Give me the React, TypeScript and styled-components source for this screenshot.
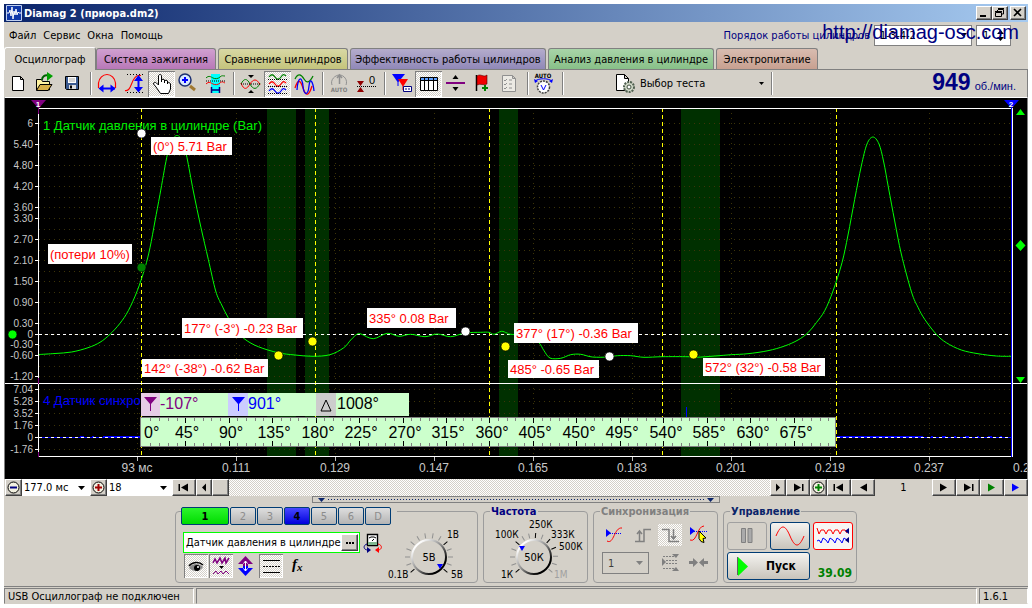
import React from "react";
import styled, { createGlobalStyle, css } from "styled-components";

const ui = `"DejaVu Sans Condensed", "Tahoma", "DejaVu Sans", sans-serif`;
const arial = `"Liberation Sans", Arial, sans-serif`;
const face = "#d4d0c8";
const checker = `repeating-conic-gradient(#ffffff 0 25%, ${face} 0 50%) 0 0 / 2px 2px`;

const GlobalStyle = createGlobalStyle`
  * { box-sizing: border-box; }
  body { margin: 0; background: #fff; font-family: ${ui}; font-size: 11px; color: #000; }
  button, select, input { font: inherit; color: inherit; margin: 0; padding: 0; border: 0; border-radius: 0; background: none; }
  svg { display: block; flex: none; }
`;

const Window = styled.div`
  margin: 4px;
  background: ${face};
`;

const TitleBar = styled.header`
  display: flex;
  align-items: center;
  height: 18px;
  padding: 0 2px;
  background: linear-gradient(90deg, #0a246a, #a6caf0);
  color: #fff;
`;
const Title = styled.h1`
  flex: 1;
  margin: 0 0 0 2px;
  font-size: 11px;
  font-weight: bold;
`;
const CaptionButton = styled.button<{ $gap?: boolean }>`
  width: 16px;
  height: 14px;
  margin-left: ${(p) => (p.$gap ? 2 : 0)}px;
  background: ${face};
  border: 1px solid;
  border-color: #fff #404040 #404040 #fff;
  box-shadow: inset -1px -1px #808080;
`;

const MenuRow = styled.div`
  position: relative;
  display: flex;
  justify-content: space-between;
  align-items: center;
  height: 26px;
  padding-left: 5px;
`;
const Menu = styled.nav`
  display: flex;
  gap: 7px;
`;
const MenuItem = styled.button`
  height: 20px;
`;
const OrderBox = styled.div`
  display: flex;
  align-items: center;
  gap: 4px;
  padding-right: 17px;
`;
const OrderLabel = styled.label`
  color: #000080;
`;
const FlatSelectWrap = styled.span<{ $w: number }>`
  display: flex;
  align-items: center;
  width: ${(p) => p.$w}px;
  height: 21px;
  padding-right: 4px;
  background: #fff;
  border: 1px solid #808080;
`;
const PlainSelect = styled.select`
  appearance: none;
  flex: 1;
  min-width: 0;
  height: 100%;
  padding-left: 5px;
`;
const SpinInput = styled.input`
  width: 20px;
  padding-left: 6px;
`;
const SiteLink = styled.a`
  position: absolute;
  right: 9px;
  top: -2px;
  font: 20px/24px ${arial};
  color: #000080;
  text-decoration: none;
`;

const Tabs = styled.div`
  display: flex;
  align-items: flex-end;
  gap: 2px;
  height: 22px;
  border-bottom: 1px solid #808080;
`;
const Tab = styled.button<{ $w: number; $bg: string; $active?: boolean }>`
  width: ${(p) => p.$w}px;
  height: 21px;
  white-space: nowrap;
  border: 1px solid #808080;
  border-bottom: 0;
  border-radius: 3px 3px 0 0;
  background: ${(p) => p.$bg};
  ${(p) =>
    p.$active &&
    css`
      height: 23px;
      margin-bottom: -1px;
      margin-right: -2px;
      border-color: #fff #808080 #fff #fff;
      align-self: flex-end;
    `}
`;

const Toolbar = styled.div`
  display: flex;
  align-items: center;
  height: 27px;
  padding-left: 1px;
  border-right: 1px solid #808080;
`;
const Tool = styled.button<{ $on?: boolean }>`
  width: 27px;
  height: 26px;
  ${(p) =>
    p.$on &&
    css`
      background: ${checker};
      box-shadow: inset 1px 1px #808080, inset -1px -1px #fff;
    `}
`;
const Sep = styled.span`
  width: 2px;
  height: 23px;
  margin: 0 2px 0 4px;
  background: linear-gradient(90deg, #808080 50%, #fff 50%);
`;
const TestPicker = styled.label`
  display: flex;
  align-items: center;
  width: 201px;
  padding: 0 3px 0 50px;
`;
const TestSelect = styled(PlainSelect)`
  height: 22px;
  padding-left: 4px;
`;
const Rpm = styled.output`
  display: flex;
  flex: 1;
  justify-content: flex-end;
  align-items: baseline;
  gap: 4px;
  padding-right: 11px;
  font: 11px/26px ${arial};
  color: #000080;
`;
const RpmValue = styled.strong`
  font-size: 23px;
`;

const ChartFrame = styled.main`
  border-top: 1px solid #fff;
  border-left: 1px solid #808080;
  border-right: 1px solid #808080;
  background: #000;
  svg { width: 100%; height: auto; }
`;

const NavRow = styled.div`
  display: flex;
  height: 17px;
  padding-left: 1px;
`;
const NavButton = styled.button<{ $w: number }>`
  display: flex;
  flex: none;
  align-items: center;
  justify-content: center;
  width: ${(p) => p.$w}px;
  height: 17px;
  background: ${face};
  border: 1px solid;
  border-color: #fff #404040 #404040 #fff;
  box-shadow: inset -1px -1px #808080;
`;
const NavSelect = styled.label<{ $w: number }>`
  display: flex;
  align-items: center;
  width: ${(p) => p.$w}px;
  padding-right: 5px;
  background: #fff;
`;
const SmallSelect = styled(PlainSelect)`
  padding-left: 2px;
`;
const Track = styled.div`
  flex: 1;
  background: ${checker};
`;
const PageNumber = styled.output`
  width: 57px;
  line-height: 17px;
  text-align: center;
`;

const Splitter = styled.button`
  display: flex;
  align-items: center;
  gap: 3px;
  width: 408px;
  height: 7px;
  margin: 0 auto;
  padding: 0 5px;
  border: 1px solid #808080;
`;
const Dots = styled.span`
  flex: 1;
  height: 1px;
  background: repeating-linear-gradient(90deg, #0a246a 0 1px, transparent 1px 3px);
`;

const Panels = styled.div`
  display: flex;
  justify-content: center;
  gap: 5px;
  height: 83px;
  padding-top: 2px;
`;
const Group = styled.fieldset<{ $w: number }>`
  width: ${(p) => p.$w}px;
  height: 78px;
  min-width: 0;
  margin: 0;
  padding: 0;
  border: 1px solid #9c9c9c;
  border-radius: 4px;
`;
const Legend = styled.legend<{ $color?: string }>`
  height: 12px;
  margin-left: 6px;
  padding: 0 1px;
  font-weight: bold;
  line-height: 14px;
  color: ${(p) => p.$color ?? "#000080"};
`;
const ChannelLegend = styled.legend`
  display: flex;
  gap: 1px;
  height: 12px;
  margin-left: 5px;
  padding: 2px 6px 0 0;
`;
const Channel = styled.button<{ $tone?: "green" | "blue" }>`
  width: ${(p) => (p.$tone === "green" ? 48 : 26)}px;
  height: 18px;
  border: 1px solid #003c74;
  border-radius: 2px;
  color: ${(p) => (p.$tone ? "#000" : "#8c8c8c")};
  font-weight: ${(p) => (p.$tone ? "bold" : "normal")};
  background: ${(p) =>
    p.$tone === "green"
      ? "linear-gradient(#2cf52c, #00dc00)"
      : p.$tone === "blue"
        ? "linear-gradient(#4848ff, #0000dc)"
        : "linear-gradient(#dedede, #b4b4b4)"};
`;
const SensorBody = styled.div`
  display: flex;
`;
const SensorColumn = styled.div`
  width: 210px;
  padding: 15px 0 0 7px;
`;
const SensorRow = styled.div`
  display: flex;
  align-items: center;
  gap: 3px;
`;
const SensorField = styled.div`
  display: flex;
  width: 177px;
  height: 21px;
  padding: 1px;
  background: #fff;
  border: 1px solid #00ff00;
`;
const SensorInput = styled.input`
  flex: 1;
  min-width: 0;
  padding-left: 1px;
`;
const OptionRow = styled.div`
  display: flex;
  gap: 1px;
  padding: 1px 0 0 1px;
`;
const Option = styled.button<{ $on?: boolean }>`
  width: 24px;
  height: 24px;
  ${(p) =>
    p.$on &&
    css`
      background: ${checker};
      box-shadow: inset 1px 1px #808080, inset -1px -1px #fff;
    `}
`;
const SyncGrid = styled.div`
  display: grid;
  grid-template-columns: repeat(4, 24px);
  gap: 6px 4px;
  padding: 7px 0 0 8px;
`;
const SyncSelect = styled.span`
  grid-column: span 2;
  display: flex;
  align-items: center;
  width: 47px;
  height: 22px;
  padding-right: 5px;
  border: 1px solid #808080;
`;
const SyncButton = styled.button<{ $on?: boolean }>`
  width: 24px;
  height: 22px;
  background: ${(p) => (p.$on ? checker : "none")};
`;
const ControlGrid = styled.div`
  display: grid;
  grid-template-columns: repeat(3, 40px);
  grid-auto-rows: 28px;
  gap: 2px 3px;
  padding: 5px 0 0 3px;
`;
const BigButton = styled.button<{ $border: string; $bg?: string; $wide?: boolean }>`
  display: flex;
  align-items: center;
  justify-content: ${(p) => (p.$wide ? "flex-start" : "center")};
  gap: 18px;
  grid-column: span ${(p) => (p.$wide ? 2 : 1)};
  padding-left: ${(p) => (p.$wide ? 9 : 0)}px;
  border: 1px solid ${(p) => p.$border};
  border-radius: 3px;
  background: ${(p) => p.$bg ?? "linear-gradient(#f4f3f0, #c8c4bb)"};
  font-size: 12px;
  font-weight: bold;
`;
const Reading = styled.output`
  align-self: end;
  padding-right: 1px;
  text-align: right;
  font-size: 12px;
  font-weight: bold;
  color: #008000;
`;

const StatusBar = styled.footer`
  display: flex;
  gap: 2px;
  height: 18px;
  border-top: 1px solid #808080;
  padding-top: 1px;
`;
const StatusCell = styled.div<{ $w?: number }>`
  ${(p) => (p.$w ? `width: ${p.$w}px;` : "flex: 1;")}
  height: 16px;
  padding-left: 3px;
  line-height: 15px;
  border: 1px solid;
  border-color: #808080 #fff ${face} #808080;
`;

/* ---------- small drawings ---------- */

const Down = ({ c = "#000" }: { c?: string }) => (
  <svg width="7" height="4" viewBox="0 0 7 4"><path d="M0 0h7L3.500 4z" fill={c} /></svg>
);

type NavKind = "first" | "prev" | "next" | "last";
const NavGlyph = ({ kind, c = "#000", small }: { kind: NavKind; c?: string; small?: boolean }) => {
  const s = small ? 4 : 7;
  const flip = kind === "first" || kind === "prev";
  return (
    <svg width="12" height="9" viewBox="0 0 12 9">
      <g transform={flip ? "matrix(-1 0 0 1 12 0)" : undefined} fill={c}>
        <path d={`M${small ? 4 : 2} 0.500v8l${s}-4z`} />
        {(kind === "first" || kind === "last") && <path d="M10 1h1.500v7H10z" />}
      </g>
    </svg>
  );
};
const RoundSign = ({ plus, c }: { plus?: boolean; c: string }) => (
  <svg width="13" height="13" viewBox="0 0 13 13">
    <circle cx="6.500" cy="6.500" r="5.500" fill="#f2f0e0" stroke="#000" />
    <path d={plus ? "M3 6.500h7M6.500 3v7" : "M3 6.500h7"} stroke={c} strokeWidth="2" />
  </svg>
);

const icon = (children: React.ReactNode) => (
  <svg width="27" height="26" viewBox="0 0 27 26" fill="none">{children}</svg>
);
const RED = "#ff0000", BLUE = "#0000ff", GREEN = "#008000";
const wave = (y: number) => `M5 ${y}c2-3 4-3 6 0s4 3 6 0 3-3 5-1`;

const NewIcon = () => icon(<path d="M7.500 5.500h8l3 3v11h-11zM15.500 5.500v3h3" fill="#fff" stroke="#000" />);
const OpenIcon = () => icon(<>
  <path d="M4.500 19V8.500h5l1 2h7V19z" fill="#fff3a0" stroke="#000" />
  <path d="M4.500 19.500l3.500-6h12l-4 6z" fill="#d8b048" stroke="#000" />
  <path d="M10 9c0-4 3-5 6-4.500" stroke="#006000" strokeWidth="2" /><path d="M15 1l6 4-6 5z" fill="#00a000" />
</>);
const SaveIcon = () => icon(<>
  <path d="M6.500 5.500h13v13h-12l-1-1z" fill="#3a5a90" stroke="#000" />
  <path d="M9 6h8v6H9z" fill="#fff" /><path d="M10 8h6M10 10h6" stroke="#aaa" />
  <path d="M10 14h7v4h-7z" fill="#ddd" /><path d="M11 14.500h2v3h-2z" fill="#000" />
</>);
const PeriodIcon = () => icon(<>
  <path d="M4.500 17V12C5 7 9 3.500 13 3.500S21 7 21.500 12v5" stroke={RED} strokeWidth="1.200" />
  <path d="M6 17.500h15" stroke={BLUE} strokeWidth="2" /><path d="M9.500 13.500v8l-5-4zM16.500 13.500v8l5-4z" fill={BLUE} />
</>);
const AmplitudeIcon = () => icon(<>
  <path d="M4 19.500c7 2 6-14 13-15h3" stroke={RED} strokeWidth="1.200" />
  <path d="M6 3.500h16M6 21.500h16" stroke="#000" strokeDasharray="1 2" />
  <path d="M17.500 7v12" stroke={BLUE} strokeWidth="2" /><path d="M13 10l4.500-6 4.500 6zM13 16h9l-4.500 5.500z" fill={BLUE} />
</>);
const HandIcon = () => icon(
  <path d="M10.500 14V5c0-2 3-2 3 0v6V9c0-1 3-1 3 0v3-2c0-1 3-1 3 0v3-1c1-1 3 0 3 1v5l-2 4.500h-8L8 16l-2.500-3c0-2 2-2 3-1z" fill="#fff" stroke="#000" />
);
const ZoomIcon = () => icon(<>
  <path d="M15 15l5 4" stroke="#a07830" strokeWidth="3" />
  <circle cx="10" cy="9" r="6" fill="#d8e8ff" stroke="#1c3070" strokeWidth="1.500" />
  <path d="M7 9h6M10 6v6" stroke={BLUE} strokeWidth="2" />
</>);
const SpanIcon = () => icon(<>
  <path d="M9 3h9v19H9z" fill="#00ffff" />
  <path d="M4 7c3-3 5-1 7 0s5 1 7-1 3-1 5-1" stroke={GREEN} /><path d="M4 13c3-3 5-1 7 0s5 1 7-1 3-1 5 0" stroke={RED} />
  <path d="M4 10h19" stroke="#000" strokeDasharray="1 1" />
  <path d="M9 19h9M9.500 16v6M17.500 16v6" stroke="#000080" strokeWidth="1.500" />
</>);
const OverlayIcon = () => icon(<>
  <path d="M4 13c3-6 6-6 9 0s7 6 10-1" stroke={GREEN} /><path d="M4 12c3 8 6 6 9 1s7-6 10 1" stroke={RED} />
  <path d="M4 13h19" stroke="#000" strokeDasharray="1 1" /><path d="M11 4h6l-3 3zM11 22h6l-3-3z" fill="#000" />
</>);
const ThreeIcon = () => icon(<>
  <path d={wave(6)} stroke={GREEN} strokeWidth="1.300" /><path d={wave(13)} stroke={RED} strokeWidth="1.300" /><path d={wave(20)} stroke={BLUE} strokeWidth="1.300" />
  <path d="M4 8.500h20M4 15.500h20M4 22.500h20" stroke="#000" strokeDasharray="1 1" />
</>);
const MixIcon = () => icon(<>
  <path d="M4 8c3-6 6-5 9 0s6 3 9-3" stroke={GREEN} strokeWidth="1.300" />
  <path d="M4 17c3-9 5-9 8 0s6 8 9-2" stroke={RED} strokeWidth="1.300" />
  <path d="M6 19c1-14 5-14 6-4s5 10 6 0 4-4 5 5" stroke={BLUE} strokeWidth="1.300" />
</>);
const AutoGrayIcon = () => icon(<>
  <path d="M6 14C4 9 9 4 13.500 4S22 9 20 14" stroke="#909090" />
  <path d="M13.500 5v8M11 7l2.500-3L16 7" stroke="#909090" strokeWidth="1.500" />
  <text x="13" y="21" textAnchor="middle" fontSize="6" fontWeight="bold" fill="#808080">AUTO</text>
</>);
const ZeroIcon = () => icon(<>
  <path d="M4 10h7l-3.500 5zM4 21h7l-3.500-5z" fill="#900000" />
  <path d="M4 15.500h19" stroke="#000" strokeDasharray="1 1" />
  <text x="16" y="13" fontFamily="Liberation Sans" fontSize="11" fill="#000">0</text>
</>);
const MarkersIcon = () => icon(<>
  <path d="M4 3h13l-6.500 8v4h-1v-4z" fill={BLUE} /><path d="M10 8h10l-4.500 7v4h-1v-4z" fill={RED} />
  <path d="M15.500 15.500h8v5h-8z" fill="#fff" stroke="#000080" /><path d="M17 18h5" stroke="#000080" strokeDasharray="2 1" />
</>);
const TableIcon = () => icon(<>
  <path d="M5.500 6.500h17v13h-17z" fill="#fff" stroke="#000" /><path d="M6 7h16v2H6z" fill="#60a0ff" />
  <path d="M6 9.500h16" stroke="#000" /><path d="M9.500 7v12M13.500 7v12M18.500 7v12" stroke="#000" />
</>);
const SplitIcon = () => icon(<>
  <path d="M4 12h19" stroke="#800080" strokeWidth="2" /><path d="M10.500 8l3-4 3 4zM10.500 16h6l-3 4z" fill="#000" />
</>);
const FlagIcon = () => icon(<>
  <path d="M7.500 4v16" stroke="#000" strokeWidth="1.500" /><path d="M8 5c4-3 6 2 10-1v9c-4 2-6-1-10 1z" fill="#f00000" stroke="#500" strokeWidth=".6" />
  <path d="M13 17h6M16 14v6" stroke={GREEN} strokeWidth="2" />
</>);
const ListIcon = () => icon(<>
  <path d="M6.500 4.500h10l3 3v13h-13zM16.500 4.500v3h3" fill="#eceae4" stroke="#909090" />
  <path d="M8 9l1 1 2-2M8 13l1 1 2-2M8 17l1 1 2-2M13 9h3M13 13h3M13 17h3" stroke="#909090" />
</>);
const AutoIcon = () => icon(<>
  <text x="12" y="7" textAnchor="middle" fontSize="6" fontWeight="bold" fill="#000">AUTO</text>
  <path d="M4 10c4-3 13-3 17 0" stroke={BLUE} /><path d="M3 8l1 4 3-2zM22 8l-1 4-3-2z" fill={BLUE} />
  <circle cx="12.500" cy="16" r="6" fill="#fff" stroke="#404040" strokeWidth="1.500" strokeDasharray="2 1" />
  <path d="M10 14l2.500 5 2.500-5" stroke={BLUE} />
</>);
const TestIcon = () => (
  <svg width="20" height="22" viewBox="0 0 20 22" fill="none">
    <path d="M.5 1.500h8l4 4v12H.5zM8.500 1.500v4h4" fill="#fff" stroke="#000" />
    <circle cx="13" cy="14" r="5" fill="#d0d8c8" stroke="#506050" strokeWidth="2" strokeDasharray="2 1" />
    <circle cx="13" cy="14" r="2" fill="#fff" stroke="#405040" />
  </svg>
);

/* ---------- oscillogram ---------- */

type Pt = [number, number];
const pressure: Pt[] = [
  [39, 354.5], [55, 353.5], [71.7, 352], [88, 347.7], [100, 342.3], [110, 334.3], [120, 323.3], [128.3, 310.7],
  [137.3, 290.7], [145, 267.7], [150, 247.7], [155, 221], [160, 194.3], [166.7, 157.7], [171, 142],
  [177, 135.5], [183, 142], [187, 157.7], [193.3, 191], [201, 227.7], [208.3, 259.3], [215.7, 291],
  [221.7, 305], [228, 317.3], [236, 330], [245, 339.3], [258.3, 346.7], [278, 352.7],
  [295, 355], [313, 356.3], [330, 354.7], [343.7, 347.8], [350.7, 340], [357.3, 334], [361, 334], [373.3, 338.7],
  [387.3, 333.3], [399, 336.3], [410.7, 334.3], [425, 336.7], [437.3, 334], [450.7, 336.7], [465, 333], [480.7, 332.3],
  [489, 332.3], [494, 334.3], [501.3, 331.3], [507, 333], [511, 334.3], [530, 336], [539, 342.7], [544, 350.7], [550, 358],
  [560.7, 358.3], [570.7, 354.7], [580.7, 354.3], [592.3, 357], [609, 357], [617.3, 355.7], [630.7, 355.7], [644, 357.3],
  [662.3, 356.7], [688, 356.7], [696.3, 357.3], [714.7, 356], [731.3, 354.7], [748, 353.7], [768, 350.7], [784.7, 346],
  [798, 340], [808, 332.7], [816.3, 322.7], [824.7, 310.7], [833, 291], [842, 262.7], [848, 235], [854.7, 199.3],
  [861.3, 166], [867, 144], [873, 137], [879, 144], [883.7, 162], [888.5, 188], [894.7, 221], [901.3, 254],
  [911.5, 292], [918, 307.3], [924.7, 319.3], [936.3, 334.3], [946.3, 342.7], [961.3, 350], [978, 353.7], [996.3, 356], [1011, 356.3],
];
const smooth = (p: Pt[]) => {
  let d = `M${p[0][0]} ${p[0][1]}`;
  for (let i = 0; i < p.length - 1; i++) {
    const a = p[Math.max(i - 1, 0)], b = p[i], c = p[i + 1], e = p[Math.min(i + 2, p.length - 1)];
    d += `C${b[0] + (c[0] - a[0]) / 6} ${b[1] + (c[1] - a[1]) / 6} ${c[0] - (e[0] - b[0]) / 6} ${c[1] - (e[1] - b[1]) / 6} ${c[0]} ${c[1]}`;
  }
  return d;
};

const yLabels: [string, number][] = [
  ["6", 123], ["5.40", 144], ["4.80", 165], ["4.20", 186], ["3.60", 207], ["3.30", 218], ["2.70", 239],
  ["2.10", 260], ["1.50", 281], ["0.90", 302], ["0.30", 323], ["0", 334], ["-0.30", 344], ["-0.60", 355],
  ["-1.20", 376], ["7.04", 389], ["5.28", 401], ["3.52", 413], ["1.76", 425], ["0", 437], ["-1.76", 449],
];
const gridRows = [
  ...Array.from({ length: 25 }, (_, i) => Math.round(123 + i * 10.55)),
  389, 401, 413, 425, 449,
];
const xLabels = ["93 мс", "0.111", "0.129", "0.147", "0.165", "0.183", "0.201", "0.219", "0.237"];
const bands = [[267, 29], [305, 24], [499, 19], [681, 39]];
const strokes = [141, 315, 489, 662, 836];
const notes: [string, number, number, number, number][] = [
  ["(0°) 5.71 Bar", 151, 137, 81, 18],
  ["(потери 10%)", 48, 244, 84, 20],
  ["177° (-3°) -0.23 Bar", 182, 318, 121, 20],
  ["142° (-38°) -0.62 Bar", 142, 359, 126, 18],
  ["335° 0.08 Bar", 367, 308, 89, 20],
  ["377° (17°) -0.36 Bar", 514, 323, 124, 20],
  ["485° -0.65 Bar", 508, 360, 91, 18],
  ["572° (32°) -0.58 Bar", 703, 358, 122, 18],
];
const points: [number, number, string][] = [
  [141, 133, "#fff"], [141, 267, "#008000"], [465, 331, "#fff"], [609, 356, "#fff"],
  [278, 355, "#ff0"], [312, 341, "#ff0"], [505, 346, "#ff0"], [693, 354, "#ff0"], [12, 334, "#0f0"],
];

const Oscillogram = () => (
  <svg viewBox="5 98 1022 381" fontFamily="Liberation Sans, Arial, sans-serif" role="img" aria-label="Осциллограмма">
    <g shapeRendering="crispEdges">
      {bands.map(([x, w]) => <rect key={x} x={x} y="109" width={w} height="347" fill="#003000" />)}
      <g stroke="#3c3408" strokeDasharray="1 4">
        {gridRows.map((y) => <path key={y} d={`M39 ${y + 0.5}H1011`} />)}
        {xLabels.map((l, i) => <path key={l} d={`M${137.5 + 99 * i} 113V456`} />)}
      </g>
      <path d="M107 436.500h34M837 436.500h82" stroke="#0000ff" />
      <path d="M39 437.500H141M837 437.500h174" stroke="#0000ff" />
      <path d="M919 436.500h92M80 436.500h27" stroke="#0000ff" strokeDasharray="4 8 2 9" />
      <path d="M39 334.500H1011M39 437.500H1011" stroke="#fff" strokeDasharray="3 3" />
      {strokes.map((x) => <path key={x} d={`M${x + 0.5} 108V456`} stroke="#ff0" strokeDasharray="4 3" />)}
      <path d="M38 108.500H1011M5 383.500H1011M1013 383.500H1027M38 456.500H1013M38.500 108V457M1012.500 108V457" stroke="#fff" />
      {yLabels.map(([, y]) => <path key={y} d={`M35 ${y + 0.5}h3`} stroke="#fff" />)}
      {xLabels.map((l, i) => <path key={l} d={`M${137.5 + 99 * i} 457v4`} stroke="#c0c0c0" />)}
      <path d="M38.500 107v7M38.500 378v6M38.500 452v5" stroke="#800080" />
      <path d="M1011.500 107V457M686.500 407v11" stroke="#0000ff" />
    </g>
    <path d={smooth(pressure)} fill="none" stroke="#00ff00" strokeWidth="1" />

    <path d="M31 100h15l-7 8h-1z" fill="#800080" />
    <path d="M1004 100h15l-7 8h-1z" fill="#0000ff" />
    <text x="38" y="107" fontSize="8" fontWeight="bold" fill="#fff" textAnchor="middle">1</text>
    <text x="1011" y="107" fontSize="8" fontWeight="bold" fill="#fff" textAnchor="middle">2</text>
    <path d="M1016 115l4.500-6 4.500 6zM1020.500 240l5 5.500-5 5.500-5-5.500zM1016 377h9l-4.500 6z" fill="#00ff00" />

    <g fontFamily="Liberation Sans Narrow, Liberation Sans, sans-serif" fontSize="10" fill="#c8c8c8" textAnchor="end">
      {yLabels.map(([t, y]) => <text key={y} x="33" y={y + 4}>{t}</text>)}
    </g>
    <g fontSize="12" fill="#c8c8c8" textAnchor="middle">
      {xLabels.map((t, i) => <text key={t} x={137 + 99 * i} y="472">{t}</text>)}
      <text x="1013" y="472" textAnchor="start">0.255</text>
    </g>

    <text x="43" y="130" fontSize="13" fill="#00f000">1 Датчик давления в цилиндре (Bar)</text>
    <text x="43" y="405" fontSize="13" fill="#0000ff">4 Датчик синхро</text>

    {notes.map(([t, x, y, w, h]) => (
      <g key={t}>
        <rect x={x} y={y} width={w} height={h} fill="#fff" />
        <text x={x + 2} y={y + h / 2 + 5} fontSize="13" fill="#ff0000">{t}</text>
      </g>
    ))}
    {points.map(([x, y, c]) => <circle key={`${x}-${y}`} cx={x + 0.5} cy={y + 0.5} r="4.500" fill={c} stroke="#000" strokeWidth=".7" />)}

    <g fontSize="16">
      <rect x="141" y="393" width="268" height="23" fill="#ccffcc" />
      <rect x="141" y="393" width="19" height="23" fill="#e6cce6" />
      <rect x="228" y="393" width="20" height="23" fill="#ccccff" />
      <rect x="316" y="393" width="20" height="23" fill="#cccccc" />
      <path d="M144 397h13l-6 7v7h-1v-7z" fill="#800080" />
      <path d="M232 397h13l-6 7v7h-1v-7z" fill="#0000ff" />
      <path d="M321 411l5-11 5 11z" fill="none" stroke="#000" />
      <text x="160" y="409" fill="#800080">-107°</text>
      <text x="248" y="409" fill="#0000ff">901°</text>
      <text x="337" y="409" fill="#000">1008°</text>

      <rect x="140.500" y="417.500" width="695" height="29" fill="#ccffcc" stroke="#808080" />
      <g shapeRendering="crispEdges">
        {Array.from({ length: 79 }, (_, i) => i + 1).map((i) => {
          const x = Math.round(141.8 + i * 8.69) + 0.5;
          const major = i % 5 === 0;
          return <path key={i} d={`M${x} 418v${major ? 5 : 3}M${x} 446v-${major ? 5 : 3}`} stroke={major ? "#000" : "#808080"} />;
        })}
      </g>
      <text x="144" y="438">0°</text>
      {Array.from({ length: 15 }, (_, i) => (
        <text key={i} x={Math.round(187 + i * 43.5)} y="438" textAnchor="middle">{`${45 * (i + 1)}°`}</text>
      ))}
    </g>
  </svg>
);

/* ---------- knobs ---------- */

type KnobLabel = [string, number, number, string?];
const Knob = (p: { w: number; cx: number; cy: number; value: string; black: number[]; gray: number[]; pointer: [number, number]; labels: KnobLabel[]; id: string }) => (
  <svg width={p.w} height="65" viewBox={`0 0 ${p.w} 65`} fontSize="10" role="img" aria-label={p.value}>
    <defs>
      <linearGradient id={p.id} x1="0" y1="0" x2="1" y2="1">
        <stop offset=".15" stopColor="#fff" /><stop offset=".5" stopColor="#888" /><stop offset=".8" stopColor="#000" />
      </linearGradient>
    </defs>
    {[...p.gray.map((a) => [a, 0]), ...p.black.map((a) => [a, 1])].map(([a, b]) => (
      <path key={a} d={`M${p.cx} ${p.cy - 19}v-5`} transform={`rotate(${a} ${p.cx} ${p.cy})`} stroke={b ? "#000" : "#909090"} />
    ))}
    <circle cx={p.cx} cy={p.cy} r="17" fill={face} stroke={`url(#${p.id})`} strokeWidth="2" />
    <path d="M-3-2h6L0 3z" transform={`translate(${p.pointer[0]} ${p.pointer[1]})`} fill={BLUE} />
    <text x={p.cx} y={p.cy + 4} textAnchor="middle" fontSize="11">{p.value}</text>
    {p.labels.map(([t, x, y, c]) => <text key={t + x} x={x} y={y} fill={c ?? "#000"}>{t}</text>)}
  </svg>
);

const sIcon = (children: React.ReactNode) => <svg width="24" height="22" viewBox="0 0 24 22" fill="none">{children}</svg>;
const oIcon = (children: React.ReactNode) => <svg width="24" height="24" viewBox="0 0 24 24" fill="none">{children}</svg>;

const tabs: [string, number, string][] = [
  ["Система зажигания", 120, "linear-gradient(#d0a0d0, #b878b8)"],
  ["Сравнение цилиндров", 130, "linear-gradient(#d8d8a4, #c4c47c)"],
  ["Эффективность работы цилиндров", 196, "linear-gradient(#b4accc, #9088b8)"],
  ["Анализ давления в цилиндре", 166, "linear-gradient(#a8d4a8, #88c088)"],
  ["Электропитание", 102, "linear-gradient(#d8bcb0, #c8a090)"],
];

export default function App() {
  return (
    <>
      <GlobalStyle />
      <Window>
        <TitleBar>
          <svg width="16" height="16" viewBox="0 0 16 16" fill="none">
            <path d="M.5.5h15v15H.5z" fill="#1038a8" stroke="#c0d0f0" />
            <path d="M1 8h2l1-3 1 6 1-9 1 12 1-8 1 4 1-6 1 6 1-3 1 1h2" stroke="#fff" />
          </svg>
          <Title>Diamag 2 (приора.dm2)</Title>
          <CaptionButton aria-label="Свернуть"><svg width="14" height="12" viewBox="0 0 14 12"><path d="M3 8h6v2H3z" /></svg></CaptionButton>
          <CaptionButton aria-label="Восстановить">
            <svg width="14" height="12" viewBox="0 0 14 12" fill="none" stroke="#000"><path d="M5 2.500h5.500V7H9M5 1.500h6M4.500 3v1M2.500 5.500h6v4h-6zM2 4.500h7" /></svg>
          </CaptionButton>
          <CaptionButton $gap aria-label="Закрыть"><svg width="14" height="12" viewBox="0 0 14 12"><path d="M3 2l7 7M10 2L3 9" stroke="#000" strokeWidth="1.600" /></svg></CaptionButton>
        </TitleBar>

        <MenuRow>
          <Menu>
            {["Файл", "Сервис", "Окна", "Помощь"].map((m) => <MenuItem key={m}>{m}</MenuItem>)}
          </Menu>
          <OrderBox>
            <OrderLabel htmlFor="order">Порядок работы цилиндров</OrderLabel>
            <FlatSelectWrap $w={98}>
              <PlainSelect id="order"><option>1-3-4-2</option></PlainSelect><Down />
            </FlatSelectWrap>
            <FlatSelectWrap $w={35}>
              <SpinInput aria-label="Цилиндр" defaultValue="1" />
              <svg width="7" height="13" viewBox="0 0 7 13"><path d="M0 5l3.500-4L7 5zM0 8h7l-3.500 4z" /></svg>
            </FlatSelectWrap>
          </OrderBox>
          <SiteLink href="http://diamag-osc.com">http://diamag-osc.com</SiteLink>
        </MenuRow>

        <Tabs role="tablist">
          <Tab role="tab" aria-selected $active $w={92} $bg={face}>Осциллограф</Tab>
          {tabs.map(([t, w, bg]) => <Tab role="tab" key={t} $w={w} $bg={bg}>{t}</Tab>)}
        </Tabs>

        <Toolbar>
          <Tool aria-label="Новый"><NewIcon /></Tool>
          <Tool aria-label="Открыть"><OpenIcon /></Tool>
          <Tool aria-label="Сохранить"><SaveIcon /></Tool>
          <Sep />
          <Tool aria-label="Период"><PeriodIcon /></Tool>
          <Tool aria-label="Амплитуда"><AmplitudeIcon /></Tool>
          <Tool $on aria-label="Рука"><HandIcon /></Tool>
          <Tool aria-label="Масштаб"><ZoomIcon /></Tool>
          <Tool aria-label="Интервал"><SpanIcon /></Tool>
          <Sep />
          <Tool aria-label="Наложить"><OverlayIcon /></Tool>
          <Tool $on aria-label="Раздельно"><ThreeIcon /></Tool>
          <Tool aria-label="Совместно"><MixIcon /></Tool>
          <Sep />
          <Tool aria-label="Авто" disabled><AutoGrayIcon /></Tool>
          <Tool aria-label="Ноль"><ZeroIcon /></Tool>
          <Sep />
          <Tool aria-label="Маркеры"><MarkersIcon /></Tool>
          <Tool $on aria-label="Таблица"><TableIcon /></Tool>
          <Tool aria-label="Разделитель"><SplitIcon /></Tool>
          <Tool aria-label="Флаг"><FlagIcon /></Tool>
          <Tool aria-label="Список" disabled><ListIcon /></Tool>
          <Sep />
          <Tool aria-label="Автонастройка"><AutoIcon /></Tool>
          <Sep />
          <TestPicker>
            <TestIcon />
            <TestSelect aria-label="Тест"><option>Выбор теста</option></TestSelect>
            <svg width="5" height="3" viewBox="0 0 5 3"><path d="M0 0h5L2.500 3z" /></svg>
          </TestPicker>
          <Sep />
          <Rpm><RpmValue>949</RpmValue>об./мин.</Rpm>
        </Toolbar>

        <ChartFrame><Oscillogram /></ChartFrame>

        <NavRow>
          <NavButton $w={17} aria-label="Уменьшить"><RoundSign c="#000080" /></NavButton>
          <NavSelect $w={68}>
            <SmallSelect aria-label="Длительность"><option>177.0 мс</option></SmallSelect><Down />
          </NavSelect>
          <NavButton $w={17} aria-label="Увеличить"><RoundSign plus c="#a00000" /></NavButton>
          <NavSelect $w={65}>
            <SmallSelect aria-label="Шаг"><option>18</option></SmallSelect><Down />
          </NavSelect>
          <NavButton $w={24} aria-label="В начало"><NavGlyph kind="first" /></NavButton>
          <NavButton $w={16} aria-label="Назад"><NavGlyph kind="prev" small /></NavButton>
          <NavButton $w={17} aria-label="Ползунок" />
          <Track />
          <NavButton $w={16} aria-label="Вперёд"><NavGlyph kind="next" small /></NavButton>
          <NavButton $w={24} aria-label="В конец"><NavGlyph kind="last" /></NavButton>
          <NavButton $w={17} aria-label="Добавить"><RoundSign plus c="#008000" /></NavButton>
          <NavButton $w={24} aria-label="Первый кадр"><NavGlyph kind="first" /></NavButton>
          <NavButton $w={24} aria-label="Предыдущий кадр"><NavGlyph kind="prev" /></NavButton>
          <PageNumber>1</PageNumber>
          <NavButton $w={24} aria-label="Следующий кадр"><NavGlyph kind="next" /></NavButton>
          <NavButton $w={24} aria-label="Последний кадр"><NavGlyph kind="last" /></NavButton>
          <NavButton $w={24} aria-label="Воспроизвести"><NavGlyph kind="next" c="#008000" /></NavButton>
          <NavButton $w={24} aria-label="Воспроизвести всё"><NavGlyph kind="next" c="#0000ff" /></NavButton>
        </NavRow>

        <Splitter aria-label="Свернуть панель"><Down c="#0a246a" /><Dots /><Down c="#0a246a" /></Splitter>

        <Panels>
          <Group $w={303}>
            <ChannelLegend>
              <Channel $tone="green">1</Channel>
              <Channel>2</Channel>
              <Channel>3</Channel>
              <Channel $tone="blue">4</Channel>
              <Channel>5</Channel>
              <Channel>6</Channel>
              <Channel>D</Channel>
            </ChannelLegend>
            <SensorBody>
              <SensorColumn>
                <SensorRow>
                  <SensorField>
                    <SensorInput aria-label="Датчик" defaultValue="Датчик давления в цилиндре" />
                    <NavButton $w={17} aria-label="Выбрать датчик"><svg width="8" height="2" viewBox="0 0 8 2"><path d="M0 0h2v2H0zM3 0h2v2H3zM6 0h2v2H6z" /></svg></NavButton>
                  </SensorField>
                  <svg width="20" height="20" viewBox="0 0 20 20" fill="none">
                    <path d="M4.500 1.500h10v11h-10z" fill="#fff" stroke="#000" strokeWidth="1.400" /><path d="M5 9h9v3H5z" fill="#80b890" />
                    <path d="M6 5l2-1h3l2 1M9 8l2-2" stroke="#000" />
                    <path d="M4 11c-4 1-4 6 1 6" stroke="#000080" /><path d="M4 14l4 3-4 3z" fill="#000080" />
                    <path d="M15 11c5 1 4 6 0 6" stroke={RED} /><path d="M16 14l-4 3 4 3z" fill={RED} />
                  </svg>
                </SensorRow>
                <OptionRow>
                  <Option $on aria-label="Показать">{oIcon(<>
                    <path d="M5 14c3-5 10-5 14-1-3 5-10 5-14 1z" fill="#888" /><path d="M5 12c3-4 10-5 14-1" stroke="#000" strokeWidth="1.500" />
                    <circle cx="13" cy="14" r="3" fill="#000" /><circle cx="14" cy="13" r="1" fill="#fff" /></>)}</Option>
                  <Option $on aria-label="Фильтр">{oIcon(<>
                    <path d="M4 9l2-4 2 4 3-5 2 5 3-5 1 5 3-5" stroke="#800080" strokeWidth="1.500" /><path d="M10 12h5l-2.500 3z" fill="#000" />
                    <path d="M4 20l3-3 2 3 3-3 2 3 3-3 3 3" stroke="#800080" /></>)}</Option>
                  <Option aria-label="Сдвиг">{oIcon(<>
                    <path d="M4 10l7.500-8 7.500 8h-5v2H9v-2z" fill="#800080" /><path d="M4 14h5v-2h5v2h5l-7.500 8z" fill={BLUE} />
                    <path d="M11.500 7v10M9.500 9.500l2-2.500 2 2.500M9.500 14.500l2 2.500 2-2.500" stroke="#fff" /></>)}</Option>
                  <Option $on aria-label="Линии">{oIcon(<><path d="M4 6.500h17M4 18.500h17" stroke="#000" /><path d="M4 12.500h17" stroke="#000" strokeDasharray="2 1" /></>)}</Option>
                  <Option aria-label="Функция">{oIcon(<>
                    <text x="8" y="15" fontFamily="Liberation Serif" fontStyle="italic" fontWeight="bold" fontSize="15" fill="#000">f</text>
                    <text x="13" y="17" fontFamily="Liberation Serif" fontStyle="italic" fontWeight="bold" fontSize="11" fill="#000">x</text></>)}</Option>
                </OptionRow>
              </SensorColumn>
              <Knob id="k1" w={90} cx={43} cy={40} value="5В" black={[-130, 50, 130]}
                gray={[-110, -90, -70, -50, -30, -10, 10, 30, 70, 90, 110]} pointer={[54, 49]}
                labels={[["1В", 61, 21], ["0.1В", 2, 61], ["5В", 65, 61]]} />
            </SensorBody>
          </Group>

          <Group $w={105}>
            <Legend>Частота</Legend>
            <Knob id="k2" w={103} cx={50} cy={40} value="50К" black={[-130, -50, 4, 42, 66]}
              gray={[-110, -90, -70, -30, -13, 22, 88, 109, 130]} pointer={[38, 31]}
              labels={[["250К", 45, 11], ["100К", 11, 21], ["333К", 67, 21], ["500К", 75, 33], ["1К", 17, 61], ["1М", 70, 61, "#a0a0a0"]]} />
          </Group>

          <Group $w={125}>
            <Legend $color="#808080">Синхронизация</Legend>
            <SyncGrid>
              <SyncButton aria-label="Уровень">{sIcon(<><path d="M4 5l5 4-5 4z" fill={BLUE} /><path d="M8 9.500h12" stroke={BLUE} strokeDasharray="1 1" /><path d="M5 17c7 4 7-14 15-13" stroke={RED} /></>)}</SyncButton>
              <SyncButton aria-label="Фронт">{sIcon(<><path d="M5 17.500h9v-12h7" stroke="#808080" strokeWidth="1.500" /><path d="M9.500 7v10M7 10l2.500-3 2.500 3" stroke="#808080" strokeWidth="1.500" /></>)}</SyncButton>
              <SyncButton $on aria-label="Спад">{sIcon(<><path d="M4 5.500h7v12h10" stroke="#808080" strokeWidth="1.500" /><path d="M15.500 5v10M13 12l2.500 3 2.500-3" stroke="#808080" strokeWidth="1.500" /></>)}</SyncButton>
              <SyncButton aria-label="Захват">{sIcon(<><path d="M4 3l5 4-5 4z" fill={BLUE} /><path d="M8 7.500h14" stroke={BLUE} strokeDasharray="1 1" /><path d="M4 16c7 3 7-14 14-14" stroke={RED} /><path d="M13 7l7 7-3 .5 1 4-3-1-2-3z" fill="#ff0" stroke="#000" /></>)}</SyncButton>
              <SyncSelect><PlainSelect aria-label="Канал" disabled><option>1</option></PlainSelect><Down c="#808080" /></SyncSelect>
              <SyncButton aria-label="Сжать">{sIcon(<><path d="M4 6v8l4-4z" fill="#808080" /><path d="M8 8.500h11M8 11.500h11M5 4.500h14M5 16.500h14" stroke="#808080" strokeDasharray="2 1" /><path d="M14 2h7l-3 4zM14 19h7l-3-4z" fill="#808080" /></>)}</SyncButton>
              <SyncButton aria-label="Центр">{sIcon(<><path d="M3 10.500h6M22 10.500h-6" stroke="#808080" strokeWidth="3" /><path d="M7 6l5 4.500L7 15zM18 6l-5 4.500 5 4.500z" fill="#808080" /></>)}</SyncButton>
            </SyncGrid>
          </Group>

          <Group $w={134}>
            <Legend $color="#0a246a">Управление</Legend>
            <ControlGrid>
              <BigButton $border="#a0a0a0" $bg={face} disabled aria-label="Пауза">
                <svg width="12" height="16" viewBox="0 0 12 16"><path d="M.5.500h4v14h-4zM7 .5h4v14H7z" fill="#aaa" stroke="#808080" /></svg>
              </BigButton>
              <BigButton $border="#003c74" aria-label="Синус">
                <svg width="30" height="20" viewBox="0 0 30 20"><path d="M1 10C6-2 10-2 15 10s9 12 14 0" fill="none" stroke={RED} /></svg>
              </BigButton>
              <BigButton $border={RED} $bg="#f8f6f4" aria-label="Поток">
                <svg width="34" height="18" viewBox="0 0 34 18" fill="none">
                  <path d="M1 1l2 6 2-4 3 0 2 4 2-4 3 0 2 4 2-4 3 0 2 4 2-4 3 0 2 3" stroke={RED} />
                  <path d="M1 14l2-1 2 3 2-5 3 2 2 3 2-5 3 2 2 3 2-5 3 2 2 3 2-5 3 2" stroke={BLUE} />
                  <path d="M33 1v6l-4-3zM33 10v6l-4-3z" fill="#000080" />
                </svg>
              </BigButton>
              <BigButton $wide $border="#003c74">
                <svg width="11" height="20" viewBox="0 0 11 20"><path d="M1 1l10 9.500L1 20z" fill="#0f0" /><path d="M.5 1v18" stroke="#606060" /></svg>
                Пуск
              </BigButton>
              <Reading>39.09</Reading>
            </ControlGrid>
          </Group>
        </Panels>

        <StatusBar>
          <StatusCell $w={190}>USB Осциллограф не подключен</StatusCell>
          <StatusCell />
          <StatusCell $w={49}>1.6.1</StatusCell>
        </StatusBar>
      </Window>
    </>
  );
}
